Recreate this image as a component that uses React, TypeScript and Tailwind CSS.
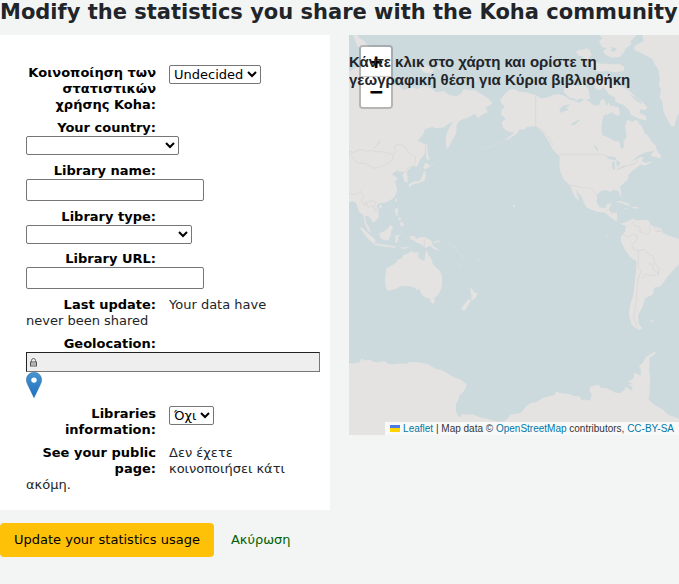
import { useState } from "react";
import type { ReactNode } from "react";

const selectClass = "block h-[19px] rounded-[2px] border border-[#767676] bg-white text-[13px] text-black";
const inputClass = "mb-px block h-[22px] w-[178px] rounded-[2px] border border-[#767676] bg-white px-1 text-[13px] text-black";

type RowProps = {
  label: string;
  htmlFor?: string;
  stacked?: boolean;
  children: ReactNode;
};

function Row({ label, htmlFor, stacked, children }: RowProps) {
  const labelClass = stacked
    ? "block w-[130px] text-right font-bold text-black"
    : "float-left mr-[13px] w-[130px] text-right font-bold text-black";
  return (
    <li className="flow-root">
      {htmlFor ? (
        <label htmlFor={htmlFor} className={labelClass}>{label}</label>
      ) : (
        <span className={labelClass}>{label}</span>
      )}
      {children}
    </li>
  );
}

function MarkerIcon() {
  return (
    <svg className="mb-px" width="16" height="26" viewBox="0 0 25 41" aria-hidden="true">
      <defs>
        <linearGradient id="pin" x1="0" y1="0" x2="0" y2="1">
          <stop offset="0" stopColor="#4a94cd" />
          <stop offset="1" stopColor="#1b70c4" />
        </linearGradient>
      </defs>
      <path d="M12.5 0.5C5.8 0.5 0.5 5.8 0.5 12.4c0 2.6 0.8 5 2 7.3L12.5 40.5l10-20.8c1.2-2.3 2-4.7 2-7.3C24.5 5.8 19.2 0.5 12.5 0.5z" fill="url(#pin)" stroke="#2e6c97" strokeWidth="0.8" />
      <circle cx="12.5" cy="12.8" r="4.3" fill="#fff" />
    </svg>
  );
}

function LockIcon() {
  return (
    <svg className="pointer-events-none absolute left-1 top-[6px]" width="7" height="9" viewBox="0 0 7 9" aria-hidden="true">
      <path d="M1.5 4V2.500a2 2 0 0 1 4 0V4" fill="none" stroke="#666" />
      <rect x="0.5" y="4" width="6" height="4" fill="#eee" stroke="#555" />
      <path d="M1 6h5" stroke="#777" />
    </svg>
  );
}

function WorldMap() {
  return (
    <svg
      className="absolute inset-0 h-full w-full"
      viewBox="0 0 990 1200"
      preserveAspectRatio="xMinYMin slice"
      role="img"
      aria-label="World map"
    >
      <rect width="990" height="1200" fill="#ccd9dd" />
      <g fill="#e4e3e1" strokeLinejoin="round">
        {/* Asia */}
        <path d="M0 108L12 104 22 96 40 100 62 108 90 118 120 130 132 148 150 154 165 165 190 157 205 162 225 152 246 160 262 172 285 168 300 180 322 184 335 176 345 162 362 166 378 166 398 178 418 190 430 205 420 214 410 214 416 232 402 238 388 250 376 236 362 246 350 250 330 258 322 272 323 292 312 312 302 330 295 345 291 330 290 310 295 290 303 275 312 260 296 268 286 277 262 280 248 276 228 283 222 300 206 317 218 322 230 330 226 360 213 374 206 394 190 394 173 410 176 425 176 443 167 440 160 420 168 410 146 410 150 402 128 418 146 430 138 440 145 465 140 480 133 490 118 499 108 503 92 504 83 512 91 532 88 550 73 563 66 552 58 544 48 543 50 560 58 573 66 595 56 586 47 565 43 540 30 530 21 505 10 498 0 503z" />
        <path d="M12 0h12l8 10 14 8 12 16 16 4 5 10-18-2-12 4-14-12-10-4z" />
        <path d="M212 96l12-7 14 4 6 10 12 2-8 10-20-2-8-6zM268 92l10 4-6 8-8-5zM365 126l12 2 8 9-12 4z" />
        {/* North and South America */}
        <path d="M453 196L470 174 482 164 495 162 512 170 530 172 545 176 560 180 575 190 592 188 612 180 630 178 650 184 662 194 675 196 690 204 705 194 720 198 735 212 750 210 756 195 765 192 772 214 780 200 786 222 776 234 763 244 758 270 758 290 760 300 783 310 795 318 811 320 814 334 818 343 825 335 823 320 833 305 830 288 828 275 835 254 850 260 862 254 872 268 880 276 888 298 896 300 908 320 923 335 918 347 890 352 868 362 853 374 840 382 854 376 874 366 884 366 878 378 890 384 902 380 912 378 900 386 884 393 878 388 862 398 850 408 838 420 836 436 828 440 813 455 816 470 818 484 814 484 808 467 793 465 786 470 770 466 758 467 745 476 743 500 751 517 768 520 775 507 788 505 781 520 783 530 803 533 805 545 803 558 813 567 828 562 838 558 853 550 858 556 875 555 898 556 904 568 913 575 930 576 938 584 943 595 963 603 990 612 990 688 973 705 953 728 940 748 933 755 915 758 913 778 888 790 881 815 868 840 868 865 880 880 868 885 848 870 840 840 843 810 853 780 858 735 861 710 863 680 843 665 828 645 816 620 816 605 828 590 831 572 820 570 806 562 788 550 768 533 743 530 711 517 698 485 683 468 677 458 686 480 691 498 680 488 672 475 666 456 656 444 645 435 636 415 631 400 632 364 612 344 600 320 580 290 560 273 535 276 525 284 512 283 506 294 480 312 466 318 482 304 496 292 478 290 462 278 458 262 470 252 456 238 458 224 468 214 458 208z" />
        <path d="M906 358l12-12 6-4 2 10 10 8-2 12-10-6-14-1z" />
        {/* Arctic islands and Greenland */}
        <path d="M880 0l4 18-28 16 0 10 20 10 34 18 6 14 12 18 4 26-2 22 6 12-4 24 8 10 3 32 16 30 10 16 8-4 6-24 7-14V0z" />
        <path d="M750 0h112l-8 10-10 10 4 8-18 12-6 14-12 12-22 2-20-8-8-12 12-8-16-4-8-18 10-8z" />
        <path d="M680 52l10-8 16 0 4-6 12 8 6 14-10 12-12 2-6-10-10-2zM726 82l14-4 10 8 22 0 20 2 22 0 12 8-2 12-24 4-30-4-20 2-14-6-8-10z" />
        <path d="M645 158l22-10 18 4 12-8 14 10 8 10 4 26-14 6-14-6-12 6-12-8-8 2-18-18zM735 144l10-10 12 4 6 18-10 10-12-4z" />
        <path d="M756 126l18-8 14 10 16 22 22 8 16 10 18 18 20 14 16 18-8 8-14-4-2 12 18 8 2 14-20-4-26-12-6-16-16-14-24-8-2-14-18-10-14-18z" />
        <path d="M768 216l18-4 22 4 6 22-10 6-16-12-14 8-8-10z" />
      </g>
      <g fill="#e4e3e1" transform="translate(-12 255)">
        {/* Sakhalin, Japan */}
        <path d="M242 70l5 4 1 28 6 18-10-2-1-18zM240 130l6 0 11 8-9 6-9 4-4-8zM238 150l5 15-5 18-22 8-10 1-8 5-4 8-3-12 14-8 18-2 9-15z" />
        {/* South-east Asia */}
        <path d="M42 320l12 4 14 15 14 11 9 10-1 11-10-4-14-14zM88 370l18 2 24 4 20 3 3 4-26-2-26-4-14-3zM103 340l14-6 12-10 8-10 8 7-7 12-2 19-8 10-12-3-10-4zM150 348l4-2 14-1-10 7 6 13-6-6-2 10-6-1 2-13-2-7zM152 264l7 2-1 18 5 5-9-3-5-12zM160 290l8 4-2 10-4-4zM164 308l10-2 3 12-8 2zM165 382l12 0 16-2-16 8zM105 254l6 2-3 10-7-5zM152 236l4-3-1 14-5-4z" />
        <path d="M195 348l14 0 4 9 14-6 14 1 18 10 4 14 14 10 8 6-14-2-16-12-15 6-12-12-12-4-12-8-8-3zM266 366l18-5 4-8-4 12-16 4z" />
        <path d="M310 368l12 8 18 20M345 400l13 16M338 434l10 8M393 424l12-10" fill="none" stroke="#dcdfdf" strokeWidth="3" />
        <path d="M400 88l24-4 20-6 30-14 26-20M255 136l14-7 26-18M180 345l4 14 10 0" fill="none" stroke="#d8dedf" strokeWidth="2" />
        {/* Australia */}
        <path d="M122 460l2-15 14-8 14-8 6-10 12-4 6-10 12-4 10-7 10 4 14-1-4 14 12 8 8 4 4-30 4 0 6 14 6 6 6 20 10 10 11 10 6 16 1 24-4 16-8 14-8 9-12 5-10-2-14-4-8-12-6-14-6 6-8-8-14-5-26 1-16 8-14 4-12 1-2-6-4-22z" />
        <path d="M254 537l16-1-1 10-6 6-5-5zM374 502l12 10 4 7 9 0-7 14-8 8-6-1 2-12zM370 537l8 6-8 12-8 14-8 2-6-3 6-11z" />
        {/* Antarctica */}
        <path d="M12 730L28 730 45 727 48 715 60 721 75 720 88 726 100 727 118 723 130 731 150 733 165 730 185 732 192 726 215 727 232 729 250 733 262 741 272 746 286 749 300 755 316 766 330 773 346 778 360 788 365 792 362 804 354 816 343 828 340 842 333 850 333 872 338 886 345 893 350 882 364 884 382 883 404 892 430 897 452 904 475 905 486 898 497 883 518 881 530 876 542 860 555 850 573 847 595 833 616 828 628 826 633 815 648 820 672 822 690 829 703 829 712 843 716 838 736 842 740 824 733 812 736 800 760 794 768 804 780 803 795 809 812 818 825 820 834 812 842 808 836 804 844 802 862 812 862 800 850 795 862 792 850 784 866 776 867 758 878 762 886 768 888 750 882 736 893 730 902 712 918 702 934 693 928 704 913 714 914 730 912 752 916 774 914 800 914 824 910 838 930 856 952 868 970 884 1002 896V945H12z" />
        <path d="M914 603l8-3 6 3-8 3z" />
      </g>
      <g fill="#e4e3e1" transform="translate(483 255)">
        <path d="M316 246l14-4 22 8 12 8-18-4-14-6zM364 262l16-2 8 4-16 2zM344 264l8 0 0 2-8 0zM10 254l6 4-2 5-5-3zM287 346l6 0 0 3-5 0z" />
      </g>
      {/* lakes and inlets */}
      <g fill="#ccd9dd">
        <path d="M94 313l-3 12-10 12-11 5 12-10 6-10zM772 368l12-4 16 4 4 8-12-2-12-1zM789 383l7-6 2 26-6 2-3-10zM802 376l12 6-6 14-6-8zM804 402l16-6 2-5 8-2-6 8-18 7zM736 328l8 8 4 14-4-2-8-14zM630 224l12-12 22-4-12 10 8 8-14 2-8 6zM664 268l14-8 16-8-6 8-12 10zM840 178l14 6 20 14 6 10-20-12zM788 36l14 4-4 10-12-2zM722 94l10 6-6 8zM780 126l8 18-6 2-8-14z" />
      </g>
      <g fill="none" stroke="#d8d3d5" strokeWidth="2">
        <path d="M560 181V275l18 8 22 26 12 20M632 358H758l22 8M808 402l22-8 30-10 8-14M664 450l38 8 22 2 10 8 12 18" />
        <path d="M0 350L14 352 28 346 40 343 50 349 70 347 84 351 100 350 114 354 132 358 142 350 136 340 142 330 158 328 168 336 176 350 192 362 200 366 198 384 190 394 178 398 168 410M0 352L8 366 24 382 50 386 74 400 100 394 122 382 132 370 132 358" />
        <path d="M0 476l22 2 12-10 10 16-6 14 10 14 10-12 16-4 8 10-8 8 14 16 4 14M48 500l10 18 14-6 8 20M226 612v28" />
        <path d="M771 525l12-2 4 10M786 538l14-8M849 558L857 572 873 576 873 590 891 598 905 588 901 570M818 598l20 8 14-8 12 6M864 600l-2 18-14 10 4 14 16 6 18-6 6 10 22 14 2 18 14 16-2 18-16 4-22-4-12 14M868 648v48l8 12-10 30-4 60-8 50 10 26M896 686l16 2 0 14 18 14M916 575l6 14 18 0M926 576l4 14" />
      </g>
    </svg>
  );
}

export default function App() {
  const [sharing, setSharing] = useState("undecided");
  const [showLibraries, setShowLibraries] = useState("no");

  return (
    <div className="min-h-screen overflow-x-hidden bg-[#f3f4f4] font-['DejaVu_Sans',sans-serif] text-[13px] leading-4 text-[#212529]">
      <h1 className="mb-[11px] whitespace-nowrap text-[21px] font-bold leading-6">
        Modify the statistics you share with the Koha community
      </h1>
      <form onSubmit={e => e.preventDefault()}>
        <div className="grid grid-cols-2 items-start gap-[19px]">
          <fieldset className="min-w-0 bg-white pb-[17px] pl-[26px] pr-[30px] pt-[30px]">
            <ol className="flex flex-col gap-[7px]">
              <Row label="Κοινοποίηση των στατιστικών χρήσης Koha:" htmlFor="sharing">
                <select id="sharing" className={`${selectClass} w-[92px]`} value={sharing} onChange={e => setSharing(e.target.value)}>
                  <option value="undecided">Undecided</option>
                  <option value="yes">Ναι</option>
                  <option value="no">Όχι</option>
                </select>
              </Row>
              <Row stacked label="Your country:" htmlFor="country">
                <select id="country" className={`${selectClass} mb-px w-[153px]`}>
                  <option value=""></option>
                </select>
              </Row>
              <Row stacked label="Library name:" htmlFor="name">
                <input id="name" type="text" className={inputClass} />
              </Row>
              <Row stacked label="Library type:" htmlFor="type">
                <select id="type" className={`${selectClass} w-[166px]`}>
                  <option value=""></option>
                </select>
              </Row>
              <Row stacked label="Library URL:" htmlFor="url">
                <input id="url" type="text" className={inputClass} />
              </Row>
              <Row label="Last update:">Your data have never been shared</Row>
              <Row stacked label="Geolocation:" htmlFor="geolocation">
                <div className="relative w-[294px]">
                  <input
                    id="geolocation"
                    type="text"
                    readOnly
                    className="block h-5 w-full border border-[#767676] border-l-[#222] border-t-[#222] bg-[#eee] pl-4 text-[13px]"
                  />
                  <LockIcon />
                </div>
                <MarkerIcon />
              </Row>
              <Row label="Libraries information:" htmlFor="libraries">
                <select id="libraries" className={`${selectClass} w-[45px]`} value={showLibraries} onChange={e => setShowLibraries(e.target.value)}>
                  <option value="no">Όχι</option>
                  <option value="yes">Ναι</option>
                </select>
              </Row>
              <Row label="See your public page:">Δεν έχετε κοινοποιήσει κάτι ακόμη.</Row>
            </ol>
          </fieldset>

          <div className="relative h-[400px] overflow-hidden font-['Liberation_Sans',Arial,sans-serif]">
            <WorldMap />
            <div className="absolute left-[10px] top-[10px] overflow-hidden rounded border-2 border-black/20 bg-clip-padding font-['DejaVu_Sans_Mono',monospace] text-[22px] font-bold text-black">
              <button type="button" aria-label="Zoom in" className="block h-[30px] w-[30px] border-b border-[#ccc] bg-white leading-[30px]">+</button>
              <button type="button" aria-label="Zoom out" className="block h-[30px] w-[30px] bg-white leading-[30px]">−</button>
            </div>
            <p className="pointer-events-none relative pr-8 pt-[18px] text-[15px] font-bold leading-[18px]">
              Κάντε κλικ στο χάρτη και ορίστε τη γεωγραφική θέση για Κύρια βιβλιοθήκη
            </p>
            <div className="absolute bottom-0 right-0 whitespace-nowrap bg-white/80 px-[5px] text-[10px] leading-[13px] text-[#333]">
              <a href="#leaflet" className="text-[#0078a8]">
                <svg className="mr-[3px] inline-block align-baseline" width="10" height="7" viewBox="0 0 10 7" aria-hidden="true">
                  <path fill="#4c7be1" d="M0 0h10v4H0z" />
                  <path fill="#ffd500" d="M0 3h10v4H0z" />
                </svg>
                Leaflet
              </a>
              {" | Map data © "}
              <a href="#osm" className="text-[#0078a8]">OpenStreetMap</a>
              {" contributors, "}
              <a href="#license" className="text-[#0078a8]">CC-BY-SA</a>
            </div>
          </div>
        </div>

        <div className="mt-[13px] flex items-center gap-[17px]">
          <button type="submit" className="h-[34px] rounded bg-[#ffc107] px-[14px] text-black">
            Update your statistics usage
          </button>
          <a href="#cancel" className="text-[#006100]">Ακύρωση</a>
        </div>
      </form>
    </div>
  );
}
